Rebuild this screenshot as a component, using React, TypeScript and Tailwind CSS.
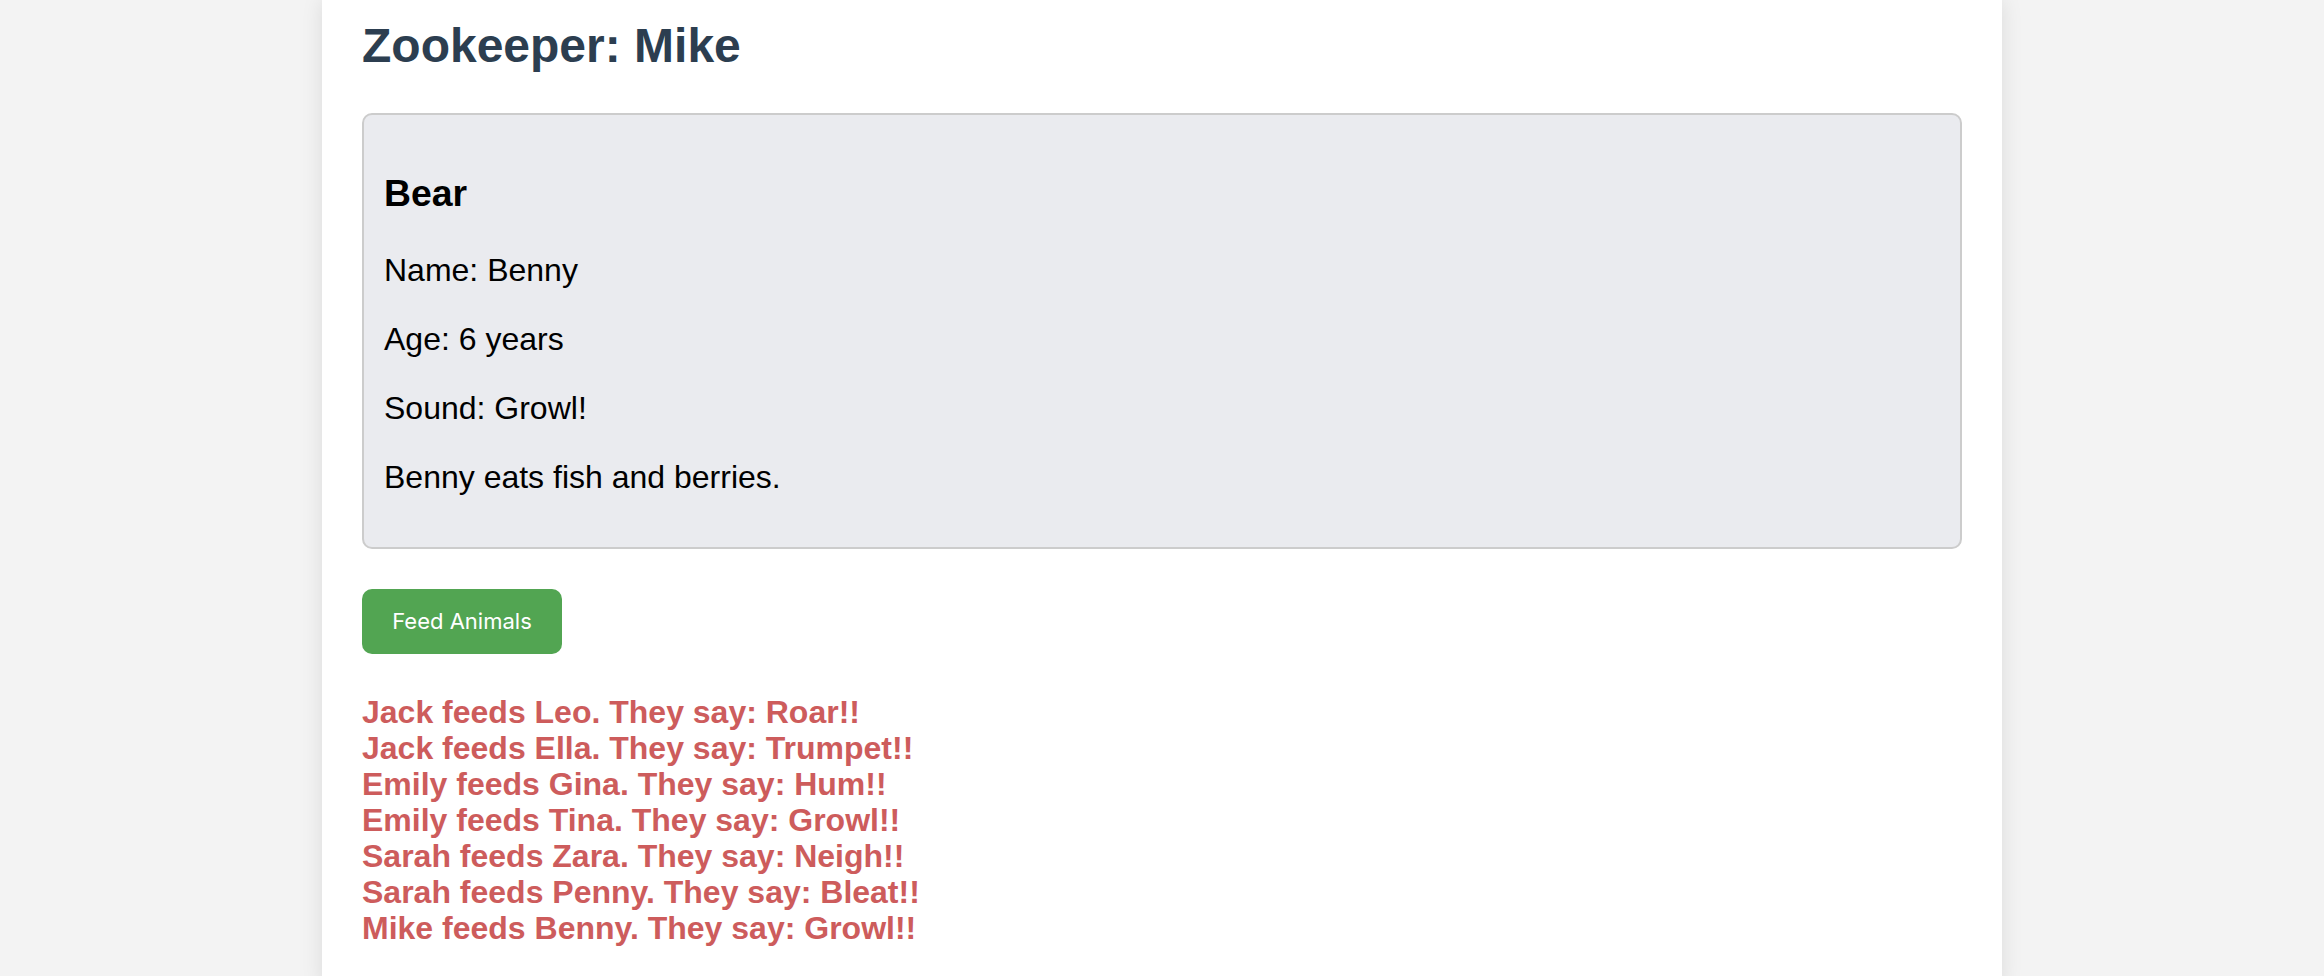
const feedings = [
  "Jack feeds Leo. They say: Roar!!",
  "Jack feeds Ella. They say: Trumpet!!",
  "Emily feeds Gina. They say: Hum!!",
  "Emily feeds Tina. They say: Growl!!",
  "Sarah feeds Zara. They say: Neigh!!",
  "Sarah feeds Penny. They say: Bleat!!",
  "Mike feeds Benny. They say: Growl!!",
]

export default function App() {
  return (
    <div className="min-h-screen bg-[#f3f3f3] font-['Liberation_Sans',Arial,sans-serif]">
      <div className="mx-auto min-h-screen w-[1680px] bg-white px-10 pt-[18px] pb-10 shadow-[0_0_20px_rgba(0,0,0,0.1)]">
        <h2 className="mb-10 text-[48px] font-bold leading-[1.15] text-[#2c3e50]">Zookeeper: Mike</h2>

        <div className="mb-10 rounded-[10px] border-2 border-[#cccccc] bg-[#eaebef] p-5 text-black">
          <h3 className="my-[37px] text-[37.4px] font-bold leading-[1.15]">Bear</h3>
          <p className="my-8 text-[32px] leading-[1.15]">Name: Benny</p>
          <p className="my-8 text-[32px] leading-[1.15]">Age: 6 years</p>
          <p className="my-8 text-[32px] leading-[1.15]">Sound: Growl!</p>
          <p className="my-8 text-[32px] leading-[1.15]">Benny eats fish and berries.</p>
        </div>

        <button className="h-[65px] w-[200px] rounded-[10px] bg-[#52a552] font-['Inter',sans-serif] text-[22px] text-white">
          Feed Animals
        </button>

        <div className="mt-10">
          {feedings.map((line) => (
            <div key={line} className="text-[32px] font-bold leading-[36px] text-[#cd5c5c]">
              {line}
            </div>
          ))}
        </div>
      </div>
    </div>
  )
}
